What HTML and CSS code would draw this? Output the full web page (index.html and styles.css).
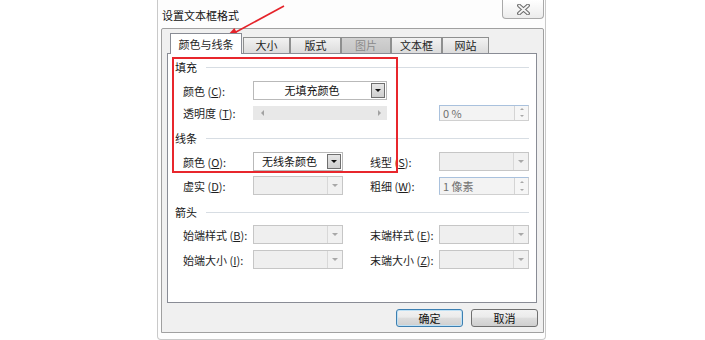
FILE: index.html
```html
<!DOCTYPE html>
<html lang="zh-CN">
<head>
    <meta charset="UTF-8" />
    <meta name="viewport" content="width=device-width, initial-scale=1.0" />
    <title>设置文本框格式</title>
    <link rel="stylesheet" href="styles.css">
</head>
<body>
    <div class="dialog">
        <div class="title-bar">
            <span class="title-text">设置文本框格式</span>
            <button class="close-btn">
                <svg width="13" height="11" viewBox="0 0 13 11">
                    <path d="M2 1.5 L11 9.5 M11 1.5 L2 9.5" stroke="#6b6b6b" stroke-width="3.8" stroke-linecap="round" fill="none"/>
                    <path d="M2 1.5 L11 9.5 M11 1.5 L2 9.5" stroke="#f4f4f4" stroke-width="1.7" stroke-linecap="round" fill="none"/>
                </svg>
            </button>
        </div>

        <div class="panel">
            <div class="tabs">
                <div class="tab active">颜色与线条</div>
                <div class="tab narrow">大小</div>
                <div class="tab">版式</div>
                <div class="tab disabled">图片</div>
                <div class="tab">文本框</div>
                <div class="tab narrow">网站</div>
            </div>

            <div class="tab-content">
                <div class="group-title first">填充</div>
                <div class="row row-fill-color">
                    <span class="label">颜色 (<u>C</u>):</span>
                    <div class="combo wide">
                        <span class="combo-text center">无填充颜色</span>
                        <span class="combo-btn"><i class="arrow-down"></i></span>
                    </div>
                </div>
                <div class="row row-transparency">
                    <span class="label">透明度 (<u>T</u>):</span>
                    <div class="slider">
                        <i class="arrow-left"></i>
                        <i class="arrow-right"></i>
                    </div>
                    <div class="spin short">
                        <span class="spin-text">0 %</span>
                        <span class="spin-btns"><i class="arrow-up small"></i><i class="arrow-down small"></i></span>
                    </div>
                </div>

                <div class="group-title second">线条</div>
                <div class="row row-line-color">
                    <span class="label">颜色 (<u>O</u>):</span>
                    <div class="combo">
                        <span class="combo-text">无线条颜色</span>
                        <span class="combo-btn"><i class="arrow-down"></i></span>
                    </div>
                    <span class="label label-right">线型 (<u>S</u>):</span>
                    <div class="combo off">
                        <span class="combo-text"></span>
                        <span class="combo-btn"><i class="arrow-down"></i></span>
                    </div>
                </div>
                <div class="row row-dash">
                    <span class="label">虚实 (<u>D</u>):</span>
                    <div class="combo off">
                        <span class="combo-text"></span>
                        <span class="combo-btn"><i class="arrow-down"></i></span>
                    </div>
                    <span class="label label-right">粗细 (<u>W</u>):</span>
                    <div class="spin">
                        <span class="spin-text">1 像素</span>
                        <span class="spin-btns"><i class="arrow-up small"></i><i class="arrow-down small"></i></span>
                    </div>
                </div>

                <div class="group-title third">箭头</div>
                <div class="row row-begin-style">
                    <span class="label">始端样式 (<u>B</u>):</span>
                    <div class="combo off">
                        <span class="combo-text"></span>
                        <span class="combo-btn"><i class="arrow-down"></i></span>
                    </div>
                    <span class="label label-right">末端样式 (<u>E</u>):</span>
                    <div class="combo off">
                        <span class="combo-text"></span>
                        <span class="combo-btn"><i class="arrow-down"></i></span>
                    </div>
                </div>
                <div class="row row-begin-size">
                    <span class="label">始端大小 (<u>I</u>):</span>
                    <div class="combo off">
                        <span class="combo-text"></span>
                        <span class="combo-btn"><i class="arrow-down"></i></span>
                    </div>
                    <span class="label label-right">末端大小 (<u>Z</u>):</span>
                    <div class="combo off">
                        <span class="combo-text"></span>
                        <span class="combo-btn"><i class="arrow-down"></i></span>
                    </div>
                </div>
            </div>

            <div class="actions">
                <button class="btn btn-default">确定</button>
                <button class="btn">取消</button>
            </div>
        </div>
    </div>

    <div class="highlight-box"></div>

    <svg class="pointer-arrow" width="70" height="45" viewBox="0 0 70 45">
        <line x1="64" y1="6" x2="16" y2="32" stroke="#e5232a" stroke-width="1.6"/>
        <polygon points="5,38 18.6,35.9 14.4,28" fill="#e5232a"/>
    </svg>
</body>
</html>
```

FILE: styles.css
```css
body {
    margin: 0;
    width: 705px;
    height: 340px;
    overflow: hidden;
    background: #ffffff;
    font-family: "Noto Sans CJK SC", "Liberation Sans", sans-serif;
    font-size: 11px;
    color: #1e1e1e;
}
.dialog {
    margin-left: 157px;
    width: 389px;
    height: 340px;
    box-sizing: border-box;
    padding: 0 1px 0 3px;
    background: #fdfdfd;
    border: 1px solid #c9c9c9;
    border-top: none;
    border-radius: 0 0 4px 4px;
}
.title-bar {
    display: flex;
    justify-content: space-between;
    align-items: flex-start;
    height: 28px;
}
.title-text {
    padding: 7px 0 0 1px;
    line-height: 16px;
    color: #111;
}
.close-btn {
    width: 42px;
    height: 19px;
    padding: 0;
    display: flex;
    align-items: center;
    justify-content: center;
    border: 1px solid #a9a9a9;
    border-top: none;
    border-radius: 0 0 4px 4px;
    background: linear-gradient(#ffffff, #ececec);
}
.panel {
    height: 305px;
    box-sizing: border-box;
    padding: 4px 6px 5px 5px;
    background: #f0f0f0;
    border: 1px solid #a0a0a0;
    border-radius: 2px 2px 0 0;
}
.tabs {
    display: flex;
    align-items: flex-end;
    margin-left: 3px;
    height: 20px;
}
.tab {
    width: 51px;
    height: 16px;
    box-sizing: border-box;
    border: 1px solid #8e8f8f;
    border-bottom: none;
    background: linear-gradient(#f2f2f2, #dcdcdc);
    text-align: center;
    line-height: 15px;
}
.tab.narrow {
    width: 47px;
}
.tab.disabled {
    width: 50px;
    background: linear-gradient(#d2d2d2, #c4c4c4);
    color: #8a8a8a;
}
.tab.active {
    width: 72px;
    height: 21px;
    margin-bottom: -1px;
    margin-right: 1px;
    position: relative;
    z-index: 1;
    background: #ffffff;
    border-color: #898c95;
    line-height: 21px;
}
.tab-content {
    height: 250px;
    box-sizing: border-box;
    background: #ffffff;
    border: 1px solid #898c95;
    padding-right: 7px;
}
.group-title {
    display: flex;
    align-items: center;
    gap: 9px;
    height: 14px;
    padding-left: 7px;
    line-height: 14px;
    color: #151515;
}
.group-title::after {
    content: "";
    flex: 1;
    height: 1px;
    background: #d7dde3;
}
.group-title.first { margin-top: 6px; }
.group-title.second { margin-top: 9px; }
.group-title.third { margin-top: 10px; }
.row {
    display: flex;
    align-items: center;
    height: 19px;
    padding-left: 15px;
}
.row-fill-color { margin-top: 7px; }
.row-transparency { margin-top: 3px; }
.row-line-color { margin-top: 7px; }
.row-dash { margin-top: 5px; }
.row-begin-style { margin-top: 6px; }
.row-begin-size { margin-top: 6px; }
.label {
    width: 70px;
    white-space: nowrap;
    color: #1e1e1e;
}
.label-right {
    width: 69px;
    margin-left: 27px;
}
.combo {
    display: flex;
    width: 90px;
    height: 19px;
    box-sizing: border-box;
    border: 1px solid #b9b9b9;
    background: #ffffff;
}
.combo.wide {
    width: 134px;
}
.combo-text {
    flex: 1;
    padding-left: 8px;
    line-height: 17px;
    color: #111;
}
.combo-text.center {
    padding-left: 0;
    text-align: center;
}
.combo-btn {
    width: 12px;
    margin: 1px;
    display: flex;
    align-items: center;
    justify-content: center;
    border: 1px solid #6f6f6f;
    background: linear-gradient(#e6e6e6, #cfcfcf);
}
.combo.off {
    background: #efefef;
    border-color: #c6c6c6;
}
.combo.off .combo-btn {
    margin: 0;
    width: 14px;
    border: none;
    border-left: 1px solid #d8d8d8;
    background: #f1f1f1;
}
.arrow-down {
    width: 0;
    height: 0;
    border-left: 3px solid transparent;
    border-right: 3px solid transparent;
    border-top: 3px solid #111;
}
.combo.off .arrow-down {
    border-top-color: #a8a8a8;
}
.arrow-up {
    width: 0;
    height: 0;
    border-left: 3px solid transparent;
    border-right: 3px solid transparent;
    border-bottom: 3px solid #a8a8a8;
}
.arrow-down.small {
    border-left-width: 2px;
    border-right-width: 2px;
    border-top: 2px solid #a8a8a8;
}
.arrow-up.small {
    border-left-width: 2px;
    border-right-width: 2px;
    border-bottom-width: 2px;
}
.spin {
    display: flex;
    width: 90px;
    height: 18px;
    box-sizing: border-box;
    border: 1px solid #a9c1dd;
    border-right-color: #d0d0d0;
    border-bottom-color: #d0d0d0;
    background: #f3f3f3;
}
.spin.short {
    margin-left: auto;
    height: 16px;
}
.spin-text {
    flex: 1;
    padding-left: 3px;
    line-height: 16px;
    color: #707070;
}
.spin.short .spin-text {
    line-height: 14px;
}
.spin-btns {
    width: 13px;
    display: flex;
    flex-direction: column;
    align-items: center;
    justify-content: space-around;
    border-left: 1px solid #d4d4d4;
    background: #f6f6f6;
}
.slider {
    display: flex;
    justify-content: space-between;
    align-items: center;
    width: 134px;
    height: 14px;
    box-sizing: border-box;
    padding: 0 6px 0 8px;
    background: #e8e8e8;
}
.arrow-left {
    width: 0;
    height: 0;
    border-top: 3px solid transparent;
    border-bottom: 3px solid transparent;
    border-right: 3px solid #a2a2a2;
}
.arrow-right {
    width: 0;
    height: 0;
    border-top: 3px solid transparent;
    border-bottom: 3px solid transparent;
    border-left: 3px solid #a2a2a2;
}
.actions {
    display: flex;
    justify-content: flex-end;
    gap: 8px;
    margin-top: 6px;
    margin-right: -1px;
}
.btn {
    width: 67px;
    height: 18px;
    padding: 0;
    border: 1px solid #707070;
    border-radius: 3px;
    background: linear-gradient(#f2f2f2 0%, #ebebeb 45%, #dddddd 50%, #cfcfcf 100%);
    font-family: "Noto Sans CJK SC", "Liberation Sans", sans-serif;
    font-size: 11px;
    line-height: 15px;
    color: #111;
}
.btn-default {
    border-color: #3c7fb1;
    box-shadow: inset 0 0 0 1px #bfe1f5;
}
.highlight-box {
    position: absolute;
    left: 172px;
    top: 57px;
    width: 226px;
    height: 116px;
    box-sizing: border-box;
    border: 2px solid #e8262c;
}
.pointer-arrow {
    position: absolute;
    left: 220px;
    top: 0;
}
```
